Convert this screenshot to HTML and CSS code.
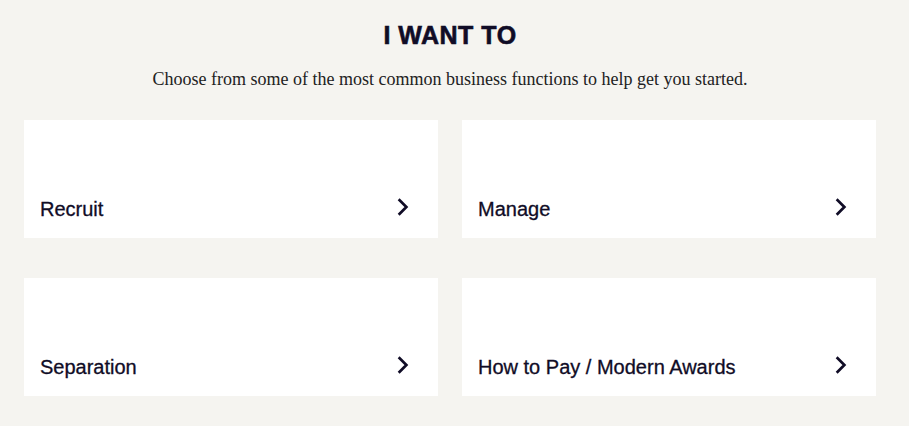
FILE: index.html
```html
<!DOCTYPE html>
<html lang="en">
<head>
    <meta charset="UTF-8">
    <meta name="viewport" content="width=device-width, initial-scale=1.0">
    <title>I want to</title>
    <link rel="stylesheet" href="styles.css">
</head>
<body>

    <section class="quicklinks">
        <h2 class="quicklinks-title">I WANT TO</h2>
        <p class="quicklinks-intro">Choose from some of the most common business functions to help get you started.</p>

        <div class="quicklinks-grid">
            <a class="quicklink" href="#">
                <span class="quicklink-label">Recruit</span>
                <svg class="quicklink-arrow" viewBox="0 0 16 16"><path d="M5 2l6 6-6 6"/></svg>
            </a>
            <a class="quicklink" href="#">
                <span class="quicklink-label">Manage</span>
                <svg class="quicklink-arrow" viewBox="0 0 16 16"><path d="M5 2l6 6-6 6"/></svg>
            </a>
            <a class="quicklink" href="#">
                <span class="quicklink-label">Separation</span>
                <svg class="quicklink-arrow" viewBox="0 0 16 16"><path d="M5 2l6 6-6 6"/></svg>
            </a>
            <a class="quicklink" href="#">
                <span class="quicklink-label">How to Pay / Modern Awards</span>
                <svg class="quicklink-arrow" viewBox="0 0 16 16"><path d="M5 2l6 6-6 6"/></svg>
            </a>
        </div>
    </section>

</body>
</html>
```

FILE: styles.css
```css
body {
    margin: 0;
    padding: 0;
    background-color: #f5f4f0;
    color: #100c26;
    font-family: 'Liberation Sans', Arial, sans-serif;
}

.quicklinks {
    padding: 20px 33px 30px 24px;
}

.quicklinks-title {
    margin: 0;
    text-align: center;
    font-size: 25px;
    font-weight: 900;
    letter-spacing: 0.5px;
    line-height: 30px;
    -webkit-text-stroke: 0.6px #100c26;
}

.quicklinks-intro {
    margin: 18px 0 0;
    text-align: center;
    font-family: 'Liberation Serif', 'Times New Roman', serif;
    font-size: 18px;
    line-height: 22px;
    color: #222;
}

.quicklinks-grid {
    display: grid;
    grid-template-columns: 414px 414px;
    column-gap: 24px;
    row-gap: 40px;
    margin-top: 30px;
}

.quicklink {
    display: flex;
    align-items: flex-end;
    justify-content: space-between;
    height: 118px;
    padding: 0 26px 17px 16px;
    box-sizing: border-box;
    background-color: #fff;
    color: #100c26;
    text-decoration: none;
}

.quicklink-label {
    font-size: 20px;
    line-height: 24px;
    -webkit-text-stroke: 0.3px #100c26;
}

.quicklink-arrow {
    width: 18px;
    height: 18px;
    margin-bottom: 5px;
    fill: none;
    stroke: #100c26;
    stroke-width: 2.4;
    stroke-linecap: square;
}
```
